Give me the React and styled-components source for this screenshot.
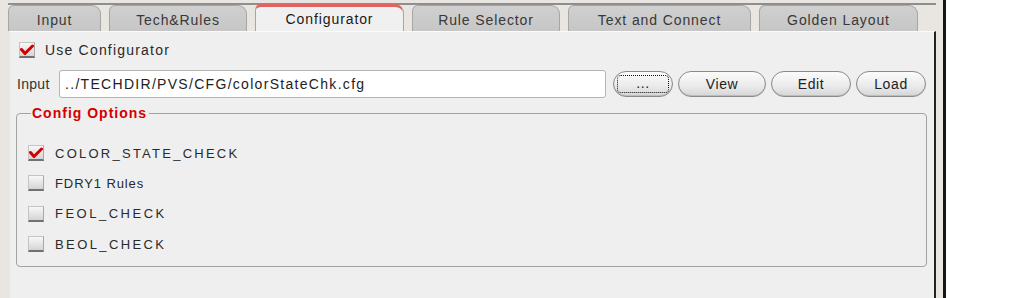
import React from "react";
import styled, { createGlobalStyle } from "styled-components";

const GlobalStyle = createGlobalStyle`
  html, body {
    margin: 0;
    padding: 0;
    background: #ffffff;
    font-family: "Liberation Sans", Arial, sans-serif;
    color: #222;
  }
`;

const TABS = [
  { label: "Input", width: 93 },
  { label: "Tech&Rules", width: 138 },
  { label: "Configurator", width: 149, active: true },
  { label: "Rule Selector", width: 148 },
  { label: "Text and Connect", width: 183 },
  { label: "Golden Layout", width: 159 },
];

const OPTIONS = [
  { label: "COLOR_STATE_CHECK", checked: true, spacing: 2.25 },
  { label: "FDRY1 Rules", checked: false, spacing: 0.9 },
  { label: "FEOL_CHECK", checked: false, spacing: 2.5 },
  { label: "BEOL_CHECK", checked: false, spacing: 2.4 },
];

const CheckBox = ({ checked }) => (
  <Box>
    {checked && (
      <svg width="14" height="12" viewBox="0 0 14 12">
        <path
          d="M1.5 5.5 L5 9.5 L12.5 2"
          fill="none"
          stroke="#d40000"
          strokeWidth="3"
          strokeLinecap="round"
          strokeLinejoin="round"
        />
      </svg>
    )}
  </Box>
);

export default function App() {
  return (
    <>
      <GlobalStyle />
      <Window>
        <TabBar>
          {TABS.map((t) => (
            <Tab key={t.label} $width={t.width} $active={t.active}>
              {t.label}
            </Tab>
          ))}
        </TabBar>
        <Panel>
          <UseRow>
            <CheckBox checked />
            <Label>Use Configurator</Label>
          </UseRow>
          <InputRow>
            <FieldLabel>Input</FieldLabel>
            <TextField>../TECHDIR/PVS/CFG/colorStateChk.cfg</TextField>
            <PillButton $width={60} $focused>
              <FocusRing>...</FocusRing>
            </PillButton>
            <PillButton $width={88}>View</PillButton>
            <PillButton $width={80}>Edit</PillButton>
            <PillButton $width={70}>Load</PillButton>
          </InputRow>
          <Group>
            <Legend>Config Options</Legend>
            {OPTIONS.map((o) => (
              <OptionRow key={o.label}>
                <CheckBox checked={o.checked} />
                <OptionLabel $spacing={o.spacing}>{o.label}</OptionLabel>
              </OptionRow>
            ))}
          </Group>
        </Panel>
      </Window>
    </>
  );
}

const Window = styled.div`
  width: 928px;
  height: 298px;
  padding: 0 7px 0 8px;
  background: #e9e6e2;
  border-right: 3px solid #151515;
  display: flex;
  flex-direction: column;
  overflow: hidden;
`;

const TabBar = styled.div`
  margin-top: 3px;
  height: 26px;
  border-top: 2px solid #8e8e8e;
  display: flex;
`;

const Tab = styled.div`
  box-sizing: border-box;
  width: ${(p) => p.$width}px;
  margin-right: 8px;
  height: ${(p) => (p.$active ? 27 : 26)}px;
  margin-top: ${(p) => (p.$active ? -1 : 0)}px;
  background: ${(p) =>
    p.$active ? "#f0f0f0" : "linear-gradient(#d0d0d0, #c6c6c6)"};
  border: 1px solid #a6a6a6;
  border-top: ${(p) => (p.$active ? "3px solid #e06464" : "1px solid #a6a6a6")};
  border-bottom: none;
  border-radius: 6px 9px 0 0;
  display: flex;
  align-items: center;
  justify-content: center;
  font-size: 14px;
  letter-spacing: 0.9px;
  color: ${(p) => (p.$active ? "#1a1a1a" : "#383838")};
  padding-top: ${(p) => (p.$active ? 0 : 2)}px;
`;

const Panel = styled.div`
  flex: 1;
  margin-left: 2px;
  background: #efefef;
  border-top: 1px solid #fbfbfb;
  border-right: 2px solid #222;
  padding: 6px 7px 0 6px;
  display: flex;
  flex-direction: column;
`;

const UseRow = styled.div`
  height: 24px;
  display: flex;
  align-items: center;
  padding-left: 3px;
  gap: 10px;
`;

const Label = styled.span`
  font-size: 14px;
  letter-spacing: 1.2px;
  color: #2a2a2a;
`;

const Box = styled.span`
  box-sizing: border-box;
  width: 16px;
  height: 16px;
  flex: none;
  display: flex;
  align-items: center;
  justify-content: center;
  background: linear-gradient(#f8f8f8, #d4d4d4);
  border: 1px solid #c4c4c4;
  border-bottom: 2px solid #707070;
  border-right-color: #a8a8a8;
`;

const InputRow = styled.div`
  margin-top: 8px;
  height: 28px;
  display: flex;
  align-items: center;
  padding-left: 1px;
  margin-right: -1px;
`;

const FieldLabel = styled.span`
  font-size: 14px;
  letter-spacing: 0.3px;
  color: #333;
  width: 42px;
`;

const TextField = styled.div`
  box-sizing: border-box;
  width: 547px;
  height: 28px;
  background: #fff;
  border: 1px solid #b4b4b4;
  border-radius: 3px;
  padding-left: 5px;
  display: flex;
  align-items: center;
  font-size: 14px;
  letter-spacing: 1.3px;
  color: #222;
  margin-right: 7px;
`;

const PillButton = styled.div`
  box-sizing: border-box;
  width: ${(p) => p.$width}px;
  height: 26px;
  margin-right: 5px;
  border: 1px solid #8a8a8a;
  border-radius: 13px;
  background: linear-gradient(#fbfbfb 0%, #ececec 55%, #d6d6d6 100%);
  box-shadow: inset 0 -1px 0 #bdbdbd;
  display: flex;
  align-items: center;
  justify-content: center;
  font-size: 14px;
  letter-spacing: 0.6px;
  color: #222;
  padding: ${(p) => (p.$focused ? "3px" : 0)};
  &:last-child {
    margin-right: 0;
  }
`;

const FocusRing = styled.span`
  box-sizing: border-box;
  width: 100%;
  height: 100%;
  border: 1px dotted #111;
  border-radius: 4px;
  display: flex;
  align-items: center;
  justify-content: center;
  padding-bottom: 2px;
`;

const Group = styled.fieldset`
  margin: 7px 0 0 0;
  padding: 17px 0 8px 11px;
  height: 162px;
  box-sizing: border-box;
  border: 1px solid #a2a2a2;
  border-radius: 4px;
  display: flex;
  flex-direction: column;
`;

const Legend = styled.legend`
  margin-left: 3px;
  padding: 0 2px 0 1px;
  font-size: 14px;
  line-height: 16px;
  font-weight: bold;
  letter-spacing: 1px;
  color: #d40000;
`;

const OptionRow = styled.div`
  height: 30.3px;
  display: flex;
  align-items: center;
  gap: 11px;
`;

const OptionLabel = styled.span`
  font-size: 13px;
  letter-spacing: ${(p) => p.$spacing}px;
  color: #2a2a2a;
`;
